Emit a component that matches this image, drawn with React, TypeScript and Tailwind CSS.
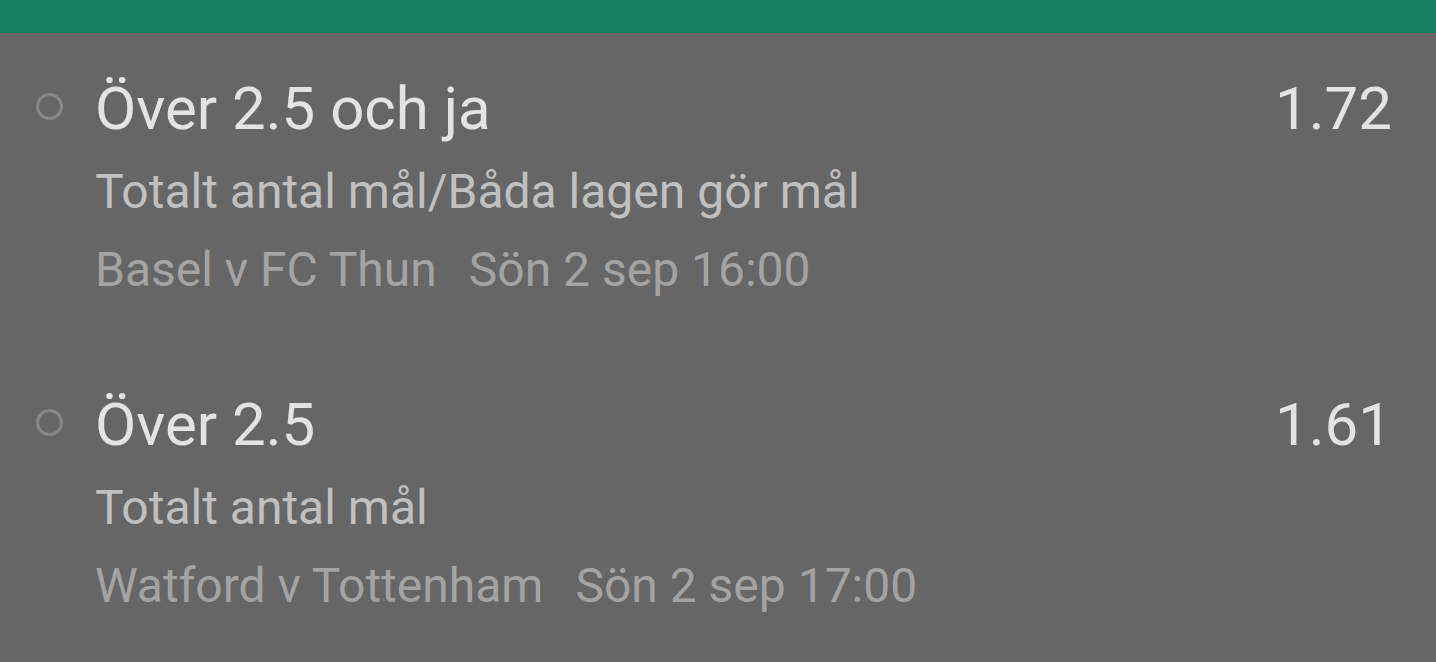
const bets = [
  {
    pick: 'Över 2.5 och ja',
    market: 'Totalt antal mål/Båda lagen gör mål',
    event: 'Basel v FC Thun',
    time: 'Sön 2 sep 16:00',
    odds: '1.72',
  },
  {
    pick: 'Över 2.5',
    market: 'Totalt antal mål',
    event: 'Watford v Tottenham',
    time: 'Sön 2 sep 17:00',
    odds: '1.61',
  },
];

export default function App() {
  return (
    <div className="min-h-screen w-full bg-[#666666] font-['Roboto',sans-serif]">
      <div className="h-[33px] bg-[#168060]" />
      <div className="flex flex-col gap-[95px] pt-[44px]">
        {bets.map((bet) => (
          <div key={bet.pick} className="flex items-start pl-[36px] pr-[44px]">
            <span className="mt-[16px] h-[27px] w-[27px] shrink-0 rounded-full border-[3px] border-[#888888]" />
            <div className="ml-[32px] flex flex-1 flex-col">
              <div className="flex items-start justify-between">
                <span className="text-[60px] leading-[64px] text-[#e3e3e3]">{bet.pick}</span>
                <span className="text-[60px] leading-[64px] text-[#e3e3e3]">{bet.odds}</span>
              </div>
              <span className="mt-[23px] text-[48px] leading-[56px] text-[#c0c0c0]">{bet.market}</span>
              <div className="mt-[22px] flex gap-[32px] text-[48px] leading-[56px] text-[#a3a3a3]">
                <span>{bet.event}</span>
                <span>{bet.time}</span>
              </div>
            </div>
          </div>
        ))}
      </div>
    </div>
  );
}
